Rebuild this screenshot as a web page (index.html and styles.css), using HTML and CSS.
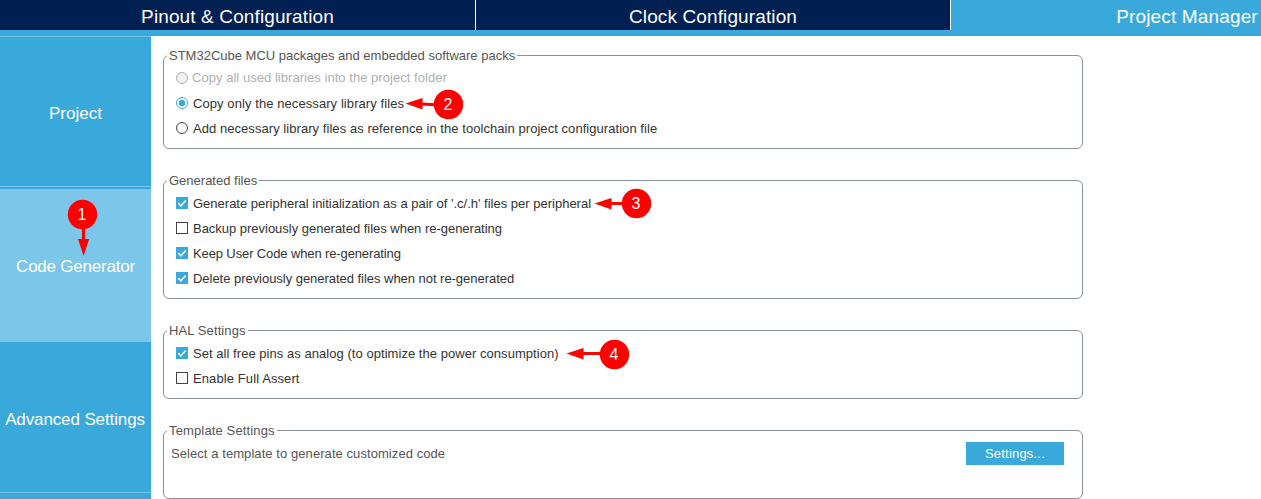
FILE: index.html
```
<!DOCTYPE html>
<html lang="en">
<head>
<meta charset="utf-8">
<title>Project Manager</title>
<link rel="stylesheet" href="styles.css">
</head>
<body>
<nav class="tabs">
  <div class="tab"><span class="t1">Pinout &amp; Configuration</span></div>
  <div class="tab"><span class="t2">Clock Configuration</span></div>
  <div class="tab current"><span class="t3">Project Manager</span></div>
</nav>
<div class="body">
  <aside class="side">
    <div class="item"><span class="s1">Project</span></div>
    <div class="item selected"><span class="s2">Code Generator</span></div>
    <div class="item last"><span class="s3">Advanced Settings</span></div>
  </aside>
  <main class="content">
    <section class="group">
      <h2><span class="h1">STM32Cube MCU packages and embedded software packs</span></h2>
      <label class="row disabled"><i class="radio"></i><span class="r1">Copy all used libraries into the project folder</span></label>
      <label class="row"><i class="radio on"></i><span class="r2">Copy only the necessary library files</span></label>
      <label class="row"><i class="radio"></i><span class="r3">Add necessary library files as reference in the toolchain project configuration file</span></label>
    </section>
    <section class="group">
      <h2><span class="h2">Generated files</span></h2>
      <label class="row"><svg class="check" viewBox="0 0 12 12"><path d="M2.2 6 4.9 8.800 9.800 3.400"/></svg><span class="r4">Generate peripheral initialization as a pair of '.c/.h' files per peripheral</span></label>
      <label class="row"><i class="box"></i><span class="r5">Backup previously generated files when re-generating</span></label>
      <label class="row"><svg class="check" viewBox="0 0 12 12"><path d="M2.2 6 4.9 8.800 9.800 3.400"/></svg><span class="r6">Keep User Code when re-generating</span></label>
      <label class="row"><svg class="check" viewBox="0 0 12 12"><path d="M2.2 6 4.9 8.800 9.800 3.400"/></svg><span class="r7">Delete previously generated files when not re-generated</span></label>
    </section>
    <section class="group">
      <h2><span class="h3">HAL Settings</span></h2>
      <label class="row"><svg class="check" viewBox="0 0 12 12"><path d="M2.2 6 4.9 8.800 9.800 3.400"/></svg><span class="r8">Set all free pins as analog (to optimize the power consumption)</span></label>
      <label class="row"><i class="box"></i><span class="r9">Enable Full Assert</span></label>
    </section>
    <section class="group template">
      <h2><span class="h4">Template Settings</span></h2>
      <div class="template-row"><span class="r10">Select a template to generate customized code</span><button class="btn"><span class="b1">Settings...</span></button></div>
    </section>
  </main>
</div>
<svg class="callouts" viewBox="0 0 1261 499">
  <path class="stem" d="M83.500 225V242M421 104 440 105M610 203.500H626M583 353.500H603"/>
  <path d="M78 239H89.200L83.600 256ZM405.500 103.500 422.500 98V109.600ZM594.500 203.500 611.500 198V209.500ZM566.500 353.500 583.500 348V359.500Z"/>
  <circle cx="82.500" cy="214.500" r="14.700"/><circle cx="448.500" cy="104.500" r="14.700"/><circle cx="636.500" cy="203.500" r="14.700"/><circle cx="614.500" cy="354.500" r="14.700"/>
  <text x="82" y="220">1</text><text x="448" y="110">2</text><text x="636" y="209">3</text><text x="614" y="360">4</text>
</svg>
</body>
</html>
```
FILE: styles.css
```
* { box-sizing: border-box; }
body { margin: 0; width: 1261px; height: 499px; overflow: hidden; background: #fff; font-family: "Liberation Sans", Arial, sans-serif; font-size: 13px; color: #333; }
span { white-space: nowrap; }
.tabs { display: flex; height: 36px; overflow: hidden; background: #39a9dc; border-bottom: 6px solid #39a9dc; }
.tab { flex: none; width: 475px; height: 30px; display: flex; justify-content: center; padding-top: 6px; line-height: 21px; font-size: 19px; color: #fff; background: #002052; }
.tab + .tab { border-left: 1px solid #fff; }
.tab.current { background: #39a9dc; padding-right: 2px; }
.body { display: flex; height: 463px; }
.side { flex: none; width: 151px; background: #39a9dc; color: #fff; font-size: 17px; }
.item { height: 151px; display: flex; align-items: center; justify-content: center; padding-top: 4px; border-top: 1px solid #7cc6ea; border-bottom: 1px solid #7cc6ea; }
.item.selected { height: 153px; margin-top: 2px; padding-top: 2px; background: #7cc6ea; }
.item.last { border-top: 0; padding: 5px 1px 0 0; }
.content { width: 932px; padding: 19px 0 0 12px; display: flex; flex-direction: column; gap: 31px; }
.group { flex: none; border: 1px solid #8c9299; border-radius: 6px; height: 94px; padding-left: 12px; }
.group:nth-child(2) { height: 119px; }
.group:nth-child(3), .group:nth-child(4) { height: 69px; }
h2 { margin: -9px 0 0 -9px; height: 18px; width: fit-content; padding: 0 2px; background: #fff; font-weight: 400; font-size: 13px; line-height: 18px; color: #555; }
.row { display: flex; align-items: center; gap: 5px; height: 25px; line-height: 25px; }
h2 + .row { margin-top: 1px; }
.disabled { color: #b0b0b0; gap: 4px; }
.disabled span { padding-bottom: 2px; }
.radio, .box, .check { flex: none; width: 12px; height: 12px; margin-bottom: 1px; }
.radio { border: 1px solid #444; border-radius: 50%; }
.disabled .radio { border-color: #b0b0b0; background: #f1f1f1; }
.radio.on { border-color: #39a9dc; background: radial-gradient(circle, #39a9dc 3px, #fff 3.600px); }
.box { border: 1px solid #444; }
.check { background: #39a9dc; }
.check path { fill: none; stroke: #fff; stroke-width: 1.500; }
.template-row { display: flex; justify-content: space-between; align-items: center; margin: 1px 18px 0 -5px; height: 24px; color: #555; }
.btn { width: 98px; height: 23px; border: 0; padding: 0; background: #39a9dc; color: #fff; font: 13px "Liberation Sans", Arial, sans-serif; }
.t1, .t2 { letter-spacing: .12px; }
.t3 { letter-spacing: .15px; }
.s2 { letter-spacing: -.22px; }
.s3 { letter-spacing: -.12px; }
.h3 { letter-spacing: .1px; }
.h4 { letter-spacing: .14px; }
.r1 { letter-spacing: .04px; }
.r2 { letter-spacing: .08px; }
.r3 { letter-spacing: .055px; }
.r5 { letter-spacing: -.02px; }
.r6 { letter-spacing: -.12px; }
.r7 { letter-spacing: -.035px; }
.r8 { letter-spacing: .045px; }
.r9 { letter-spacing: .1px; }
.r10 { letter-spacing: .07px; }
.b1 { letter-spacing: .2px; }
.callouts { position: absolute; left: 0; top: 0; width: 1261px; height: 499px; fill: red; }
.stem { stroke: red; stroke-width: 3; }
.callouts text { fill: #fff; font-size: 16px; text-anchor: middle; }
```
